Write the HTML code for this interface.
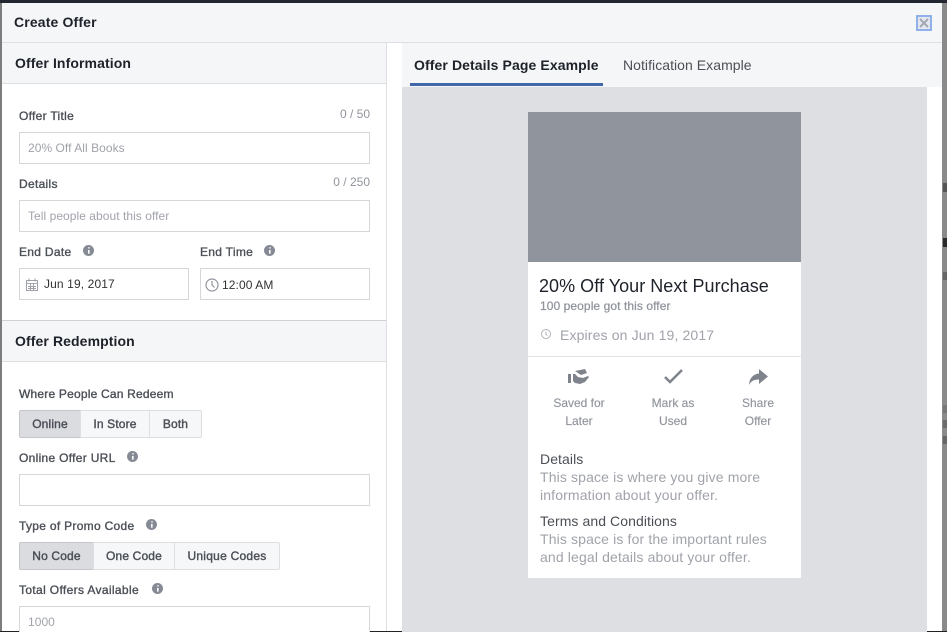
<!DOCTYPE html>
<html><head><meta charset="utf-8"><style>
html,body{margin:0;padding:0;background:#fff}
#p{position:relative;width:947px;height:632px;overflow:hidden;background:#fff;font-family:"Liberation Sans",sans-serif;font-size:12px}
#p div{position:absolute;box-sizing:border-box}
.t{white-space:nowrap;line-height:16px}
.l{color:#4b4f56;-webkit-text-stroke:.35px #4b4f56;letter-spacing:.3px}
.h{color:#1d2129;font-weight:bold;font-size:14px;letter-spacing:.1px;line-height:18px;white-space:nowrap}
.ph{color:#a0a3aa;white-space:nowrap;line-height:16px;letter-spacing:.05px}
.in{border:1px solid #d5d7db;background:#fff}
.cnt{color:#90949c;white-space:nowrap;line-height:16px;text-align:right}
.sec{background:#f5f6f7;border-bottom:1px solid #dddfe2}
.b{background:#f6f7f9;border:1px solid #dddfe2;color:#4b4f56;text-align:center;line-height:26px;height:28px;white-space:nowrap;font-weight:normal;-webkit-text-stroke:.4px #4b4f56;letter-spacing:.15px}
.on{background:#dadce0;border-color:#c4c6ca}
.a{color:#90949c;font-size:12px;line-height:18px;text-align:center;white-space:nowrap;-webkit-text-stroke:.15px #90949c}
.g{color:#a0a3aa;font-size:14px;line-height:18px;white-space:nowrap;letter-spacing:.14px}
.d{color:#4b4f56;font-size:14px;line-height:18px;white-space:nowrap;letter-spacing:.08px}
svg{position:absolute}
</style></head><body><div id="p">
<div style="left:0;top:0;width:947px;height:3px;background:#23272f"></div>
<div style="left:0;top:3px;width:2px;height:629px;background:#7d7d7d"></div>
<div style="left:942px;top:3px;width:5px;height:629px;background:#8a8a8a"></div>
<div style="left:943px;top:183px;width:4px;height:9px;background:#555"></div>
<div style="left:943px;top:238px;width:4px;height:9px;background:#2a2a2a"></div>
<div style="left:943px;top:272px;width:4px;height:8px;background:#666"></div>
<div style="left:943px;top:405px;width:4px;height:8px;background:#777"></div>
<div style="left:943px;top:420px;width:4px;height:8px;background:#6c6c6c"></div>
<div style="left:943px;top:436px;width:4px;height:8px;background:#666"></div>
<div style="left:0;top:631px;width:947px;height:1px;background:#222"></div>
<div style="left:2px;top:3px;width:940px;height:40px;background:#f5f6f7;border-bottom:1px solid #dddfe2"></div>
<div class="h" style="left:14px;top:13px;letter-spacing:.15px">Create Offer</div>
<div style="left:916px;top:15px;width:16px;height:16px;border:2px solid #8fb0ea;background:#e4e8f0"></div>
<svg style="left:916px;top:15px" width="16" height="16"><path d="M4 4L12 12M12 4L4 12" stroke="#a4a8b0" stroke-width="2"/></svg>

<div style="left:386px;top:43px;width:1px;height:588px;background:#dddfe2"></div>
<div class="sec" style="left:2px;top:43px;width:384px;height:41px"></div>
<div class="h" style="left:15px;top:54px">Offer Information</div>
<div class="t l" style="left:19px;top:108px">Offer Title</div>
<div class="cnt" style="left:300px;top:106px;width:70px">0 / 50</div>
<div class="in" style="left:19px;top:132px;width:351px;height:32px"></div>
<div class="ph" style="left:28px;top:140px">20% Off All Books</div>
<div class="t l" style="left:19px;top:176px">Details</div>
<div class="cnt" style="left:300px;top:174px;width:70px">0 / 250</div>
<div class="in" style="left:19px;top:200px;width:351px;height:32px"></div>
<div class="ph" style="left:28px;top:208px">Tell people about this offer</div>
<div class="t l" style="left:19px;top:244px">End Date</div>
<svg style="left:83px;top:245px" width="11" height="11"><circle cx="5.5" cy="5.5" r="5.5" fill="#868a94"/><path d="M6 2.2v1.3M5.8 5v3.6" stroke="#fff" stroke-width="1.6"/></svg>
<div class="t l" style="left:200px;top:244px">End Time</div>
<svg style="left:264px;top:245px" width="11" height="11"><circle cx="5.5" cy="5.5" r="5.5" fill="#868a94"/><path d="M6 2.2v1.3M5.8 5v3.6" stroke="#fff" stroke-width="1.6"/></svg>
<div class="in" style="left:19px;top:268px;width:170px;height:32px"></div>
<svg style="left:26px;top:278px" width="12" height="13" fill="none" stroke="#a0a3aa" stroke-width="1"><rect x=".5" y="2.5" width="11" height="10"/><path d="M3 .5v3M9 .5v3M.5 5.500h11M4.500 6v6M7.500 6v6M2 8.500h8M2 10.500h8"/></svg>
<div class="t" style="left:44px;top:276px;color:#333;letter-spacing:.12px">Jun 19, 2017</div>
<div class="in" style="left:200px;top:268px;width:170px;height:32px"></div>
<svg style="left:205px;top:278px" width="14" height="14" fill="none" stroke="#90949c" stroke-width="1.2"><circle cx="7" cy="7" r="6"/><path d="M7 3v4l2.500 2.500"/></svg>
<div class="t" style="left:222px;top:277px;color:#333;letter-spacing:.1px">12:00 AM</div>

<div class="sec" style="left:2px;top:320px;width:384px;height:42px;border-top:1px solid #cfd1d5"></div>
<div class="h" style="left:15px;top:332px">Offer Redemption</div>
<div class="t l" style="left:19px;top:386px;letter-spacing:.2px">Where People Can Redeem</div>
<div class="b on" style="left:19px;top:410px;width:62px;border-radius:2px 0 0 2px">Online</div>
<div class="b" style="left:80px;top:410px;width:70px">In Store</div>
<div class="b" style="left:149px;top:410px;width:53px;border-radius:0 2px 2px 0">Both</div>
<div class="t l" style="left:19px;top:450px">Online Offer URL</div>
<svg style="left:127px;top:451px" width="11" height="11"><circle cx="5.5" cy="5.5" r="5.5" fill="#868a94"/><path d="M6 2.2v1.3M5.8 5v3.6" stroke="#fff" stroke-width="1.6"/></svg>
<div class="in" style="left:19px;top:474px;width:351px;height:32px"></div>
<div class="t l" style="left:19px;top:518px">Type of Promo Code</div>
<svg style="left:146px;top:519px" width="11" height="11"><circle cx="5.5" cy="5.5" r="5.5" fill="#868a94"/><path d="M6 2.2v1.3M5.8 5v3.6" stroke="#fff" stroke-width="1.6"/></svg>
<div class="b on" style="left:19px;top:542px;width:75px;border-radius:2px 0 0 2px">No Code</div>
<div class="b" style="left:93px;top:542px;width:82px">One Code</div>
<div class="b" style="left:174px;top:542px;width:106px;border-radius:0 2px 2px 0;letter-spacing:.25px">Unique Codes</div>
<div class="t l" style="left:19px;top:582px;letter-spacing:.35px">Total Offers Available</div>
<svg style="left:152px;top:583px" width="11" height="11"><circle cx="5.5" cy="5.5" r="5.5" fill="#868a94"/><path d="M6 2.2v1.3M5.8 5v3.6" stroke="#fff" stroke-width="1.6"/></svg>
<div class="in" style="left:19px;top:606px;width:351px;height:32px"></div>
<div class="ph" style="left:28px;top:614px">1000</div>

<div style="left:402px;top:43px;width:540px;height:44px;background:#f5f6f7"></div>
<div class="h" style="left:414px;top:56px">Offer Details Page Example</div>
<div style="left:410px;top:83px;width:193px;height:3px;background:#4267a8"></div>
<div style="left:623px;top:56px;font-size:14px;line-height:18px;color:#4b4f56;white-space:nowrap;letter-spacing:.05px">Notification Example</div>
<div style="left:402px;top:87px;width:525px;height:545px;background:#dddfe3"></div>
<div style="left:528px;top:112px;width:273px;height:466px;background:#fff"></div>
<div style="left:528px;top:112px;width:273px;height:150px;background:#90949c"></div>
<div style="left:539px;top:275px;font-size:18px;line-height:22px;color:#1d2129;white-space:nowrap;letter-spacing:.04px">20% Off Your Next Purchase</div>
<div class="t" style="left:540px;top:298px;color:#90949c;-webkit-text-stroke:.25px #90949c;letter-spacing:.08px">100 people got this offer</div>
<svg style="left:541px;top:329px" width="10" height="10" fill="none" stroke="#b0b3b9" stroke-width="1"><circle cx="5" cy="5" r="4.500"/><path d="M5 2.500V5.500l1.500 1"/></svg>
<div class="g" style="left:560px;top:326px">Expires on Jun 19, 2017</div>
<div style="left:528px;top:356px;width:273px;height:1px;background:#e2e3e6"></div>
<svg style="left:567px;top:369px" width="24" height="17" fill="#7f838c"><rect x="1" y="5" width="3" height="9"/><path d="M6 5l2 0 3 3 5 1 5-2 1 1-4 5-5 2-5-1-2-2zM8 2l10-2 2 4-6 2-3-2z"/></svg>
<svg style="left:662px;top:368px" width="22" height="18"><path d="M3 9l5 5L20 2" fill="none" stroke="#7f838c" stroke-width="2.500"/></svg>
<svg style="left:748px;top:369px" width="21" height="17" fill="#7f838c"><path d="M11 0l9 7.500-9 7.500v-4.500C6 10.500 3 12 1 16c0-6 4-11 10-11.500z"/></svg>
<div class="a" style="left:539px;top:394px;width:80px">Saved for<br>Later</div>
<div class="a" style="left:633px;top:394px;width:80px">Mark as<br>Used</div>
<div class="a" style="left:718px;top:394px;width:80px">Share<br>Offer</div>
<div class="d" style="left:540px;top:450px">Details</div>
<div class="g" style="left:540px;top:468px">This space is where you give more<br>information about your offer.</div>
<div class="d" style="left:540px;top:512px">Terms and Conditions</div>
<div class="g" style="left:540px;top:530px">This space is for the important rules<br>and legal details about your offer.</div>
</div></body></html>
